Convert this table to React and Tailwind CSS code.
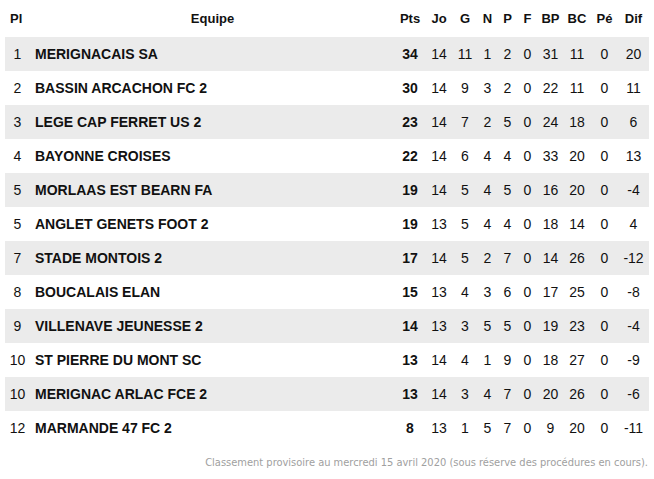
import React from 'react';

const rows = [
  ['1', 'MERIGNACAIS SA', 34, 14, 11, 1, 2, 0, 31, 11, 0, 20],
  ['2', 'BASSIN ARCACHON FC 2', 30, 14, 9, 3, 2, 0, 22, 11, 0, 11],
  ['3', 'LEGE CAP FERRET US 2', 23, 14, 7, 2, 5, 0, 24, 18, 0, 6],
  ['4', 'BAYONNE CROISES', 22, 14, 6, 4, 4, 0, 33, 20, 0, 13],
  ['5', 'MORLAAS EST BEARN FA', 19, 14, 5, 4, 5, 0, 16, 20, 0, -4],
  ['5', 'ANGLET GENETS FOOT 2', 19, 13, 5, 4, 4, 0, 18, 14, 0, 4],
  ['7', 'STADE MONTOIS 2', 17, 14, 5, 2, 7, 0, 14, 26, 0, -12],
  ['8', 'BOUCALAIS ELAN', 15, 13, 4, 3, 6, 0, 17, 25, 0, -8],
  ['9', 'VILLENAVE JEUNESSE 2', 14, 13, 3, 5, 5, 0, 19, 23, 0, -4],
  ['10', 'ST PIERRE DU MONT SC', 13, 14, 4, 1, 9, 0, 18, 27, 0, -9],
  ['10', 'MERIGNAC ARLAC FCE 2', 13, 14, 3, 4, 7, 0, 20, 26, 0, -6],
  ['12', 'MARMANDE 47 FC 2', 8, 13, 1, 5, 7, 0, 9, 20, 0, -11],
];

const stats = ['Jo', 'G', 'N', 'P', 'F', 'BP', 'BC', 'Pé', 'Dif'];

const App = () => {
  return (
    <div className="w-[654px] h-[479px] bg-white text-[#111] font-['Liberation_Sans',Arial,sans-serif] text-[14px]">
      <table className="table-fixed border-collapse ml-[5px] w-[644px]">
        <colgroup>
          <col className="w-[25px]" />
          <col className="w-[365px]" />
          <col className="w-[30px]" />
          <col className="w-[28px]" />
          <col className="w-[24px]" />
          <col className="w-[21px]" />
          <col className="w-[19px]" />
          <col className="w-[21px]" />
          <col className="w-[25px]" />
          <col className="w-[28px]" />
          <col className="w-[27px]" />
          <col className="w-[31px]" />
        </colgroup>
        <thead>
          <tr className="h-[37px] text-[13px] font-bold">
            <th className="text-left pl-[5px]">Pl</th>
            <th className="text-center">Equipe</th>
            <th className="text-center">Pts</th>
            {stats.map((s) => (
              <th key={s} className="text-center">{s}</th>
            ))}
          </tr>
        </thead>
        <tbody>
          {rows.map((r, i) => (
            <tr key={i} className={`h-[34px] ${i % 2 === 0 ? 'bg-[#ebebeb]' : 'bg-white'}`}>
              <td className="text-center">{r[0]}</td>
              <td className="pl-[5px] font-bold">{r[1]}</td>
              <td className="text-center font-bold">{r[2]}</td>
              {r.slice(3).map((v, j) => (
                <td key={j} className="text-center">{v}</td>
              ))}
            </tr>
          ))}
        </tbody>
      </table>
      <p className="mt-[10px] pr-[6px] text-right text-[11px] text-[#a0a0a0] font-['DejaVu_Sans_Condensed','DejaVu_Sans',sans-serif]">
        Classement provisoire au mercredi 15 avril 2020 (sous réserve des procédures en cours).
      </p>
    </div>
  );
};

export default App;
